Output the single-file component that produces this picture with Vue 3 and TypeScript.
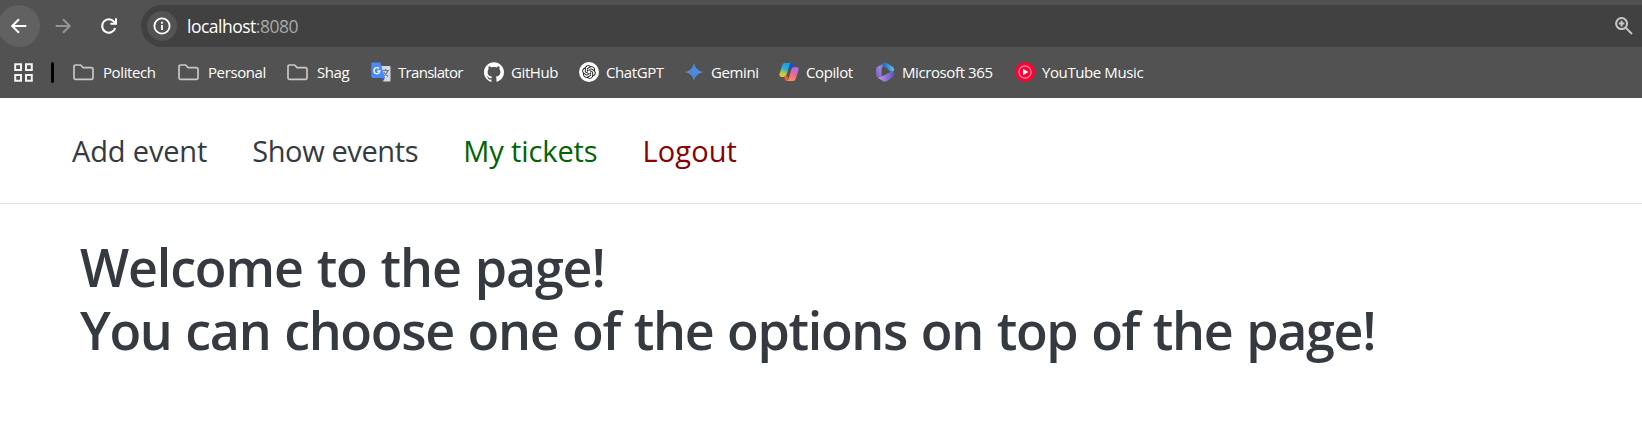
<script setup lang="ts">
interface Bookmark {
  label: string
  icon: 'folder' | 'translate' | 'github' | 'chatgpt' | 'gemini' | 'copilot' | 'm365' | 'ytmusic'
}

const bookmarks: Bookmark[] = [
  { label: 'Politech', icon: 'folder' },
  { label: 'Personal', icon: 'folder' },
  { label: 'Shag', icon: 'folder' },
  { label: 'Translator', icon: 'translate' },
  { label: 'GitHub', icon: 'github' },
  { label: 'ChatGPT', icon: 'chatgpt' },
  { label: 'Gemini', icon: 'gemini' },
  { label: 'Copilot', icon: 'copilot' },
  { label: 'Microsoft 365', icon: 'm365' },
  { label: 'YouTube Music', icon: 'ytmusic' },
]

const links = [
  { label: 'Add event', kind: 'add' },
  { label: 'Show events', kind: 'show' },
  { label: 'My tickets', kind: 'tickets' },
  { label: 'Logout', kind: 'logout' },
]
</script>

<template>
  <div class="window">
    <div class="chrome">
      <div class="toolbar">
        <button class="nav-btn back" aria-label="Back">
          <svg width="16" height="16" viewBox="0 0 16 16"><path d="M15.3 8H1.6M8 1.2 1.2 8 8 14.8" /></svg>
        </button>
        <button class="nav-btn forward" aria-label="Forward">
          <svg width="16" height="16" viewBox="0 0 16 16"><path d="M.7 8h13.7M8 1.2 14.8 8 8 14.8" /></svg>
        </button>
        <button class="nav-btn reload" aria-label="Reload">
          <svg width="18" height="18" viewBox="0 0 18 18"><path d="M15.2 11.2A6.7 6.7 0 1 1 14 4.7l1.6 1.8M16 1.2v5.6h-5.6" /></svg>
        </button>
        <div class="address">
          <span class="info">
            <svg width="18" height="18" viewBox="0 0 18 18"><circle cx="9" cy="9" r="7.6" /><path d="M9 8v5M9 4.7v2" /></svg>
          </span>
          <span class="url">localhost<span class="port">:8080</span></span>
          <svg class="zoom" width="18" height="18" viewBox="0 0 18 18"><circle cx="6.6" cy="6.6" r="5.5" /><path d="M10.6 10.6 17 17M3.8 6.6h5.6M6.6 3.8v5.6" /></svg>
        </div>
      </div>
      <div class="bookmarks">
        <svg class="apps" width="19" height="19" viewBox="0 0 19 19">
          <path d="M1.2 1.2h5.8v5.8H1.2zM12 1.2h5.8v5.8H12zM1.2 12h5.8v5.8H1.2zM12 12h5.8v5.8H12z" />
        </svg>
        <span class="divider"></span>
        <div v-for="b in bookmarks" :key="b.label" class="bookmark">
          <svg v-if="b.icon === 'folder'" class="icon" width="21" height="20" viewBox="0 0 21 20">
            <path d="M1 15.8V4.6Q1 3 2.6 3h5l2.5 2.6h8.1q1.8 0 1.8 1.8v8.4q0 1.6-1.7 1.6H2.6Q1 17.400 1 15.800z" fill="none" stroke="#c7c7c7" stroke-width="1.7" />
          </svg>
          <svg v-else-if="b.icon === 'translate'" class="icon" width="20" height="20" viewBox="0 0 20 20">
            <path d="M8 4h10.500q1 0 1 1v13.500q0 1-1 1H12z" fill="#d5d8dc" />
            <path d="m9.500 15.500h4.500l-2 4z" fill="#3157c8" />
            <path d="M11.500 8.500h6.500M14.600 7v1.500M16.700 8.500c-.5 2.700-2.300 4.600-4.200 5.500M12.800 10c.8 2 2.200 3.500 4.400 4.300" fill="none" stroke="#667b83" stroke-width="1.100" />
            <path d="M1.300.5h8L14 16H1.400q-1 0-1-1V1.500q0-1 .9-1z" fill="#4c8bf5" />
            <path d="M8 6.500A3 3 0 1 0 8.900 9H6.200" fill="none" stroke="#fff" stroke-width="1.300" />
          </svg>
          <svg v-else-if="b.icon === 'github'" class="icon" width="20" height="20" viewBox="0 0 24 24">
            <path fill="#fff" d="M12 .297c-6.630 0-12 5.373-12 12 0 5.303 3.438 9.800 8.205 11.385.6.113.82-.258.82-.577 0-.285-.01-1.040-.015-2.040-3.338.724-4.042-1.610-4.042-1.610C4.422 18.070 3.633 17.700 3.633 17.700c-1.087-.744.084-.729.084-.729 1.205.084 1.838 1.236 1.838 1.236 1.070 1.835 2.809 1.305 3.495.998.108-.776.417-1.305.76-1.605-2.665-.3-5.466-1.332-5.466-5.930 0-1.310.465-2.380 1.235-3.220-.135-.303-.54-1.523.105-3.176 0 0 1.005-.322 3.300 1.230.96-.267 1.980-.399 3-.405 1.020.006 2.040.138 3 .405 2.280-1.552 3.285-1.230 3.285-1.230.645 1.653.24 2.873.12 3.176.765.84 1.230 1.910 1.230 3.220 0 4.610-2.805 5.625-5.475 5.920.42.36.81 1.096.81 2.220 0 1.606-.015 2.896-.015 3.286 0 .315.21.69.825.57C20.565 22.092 24 17.592 24 12.297c0-6.627-5.373-12-12-12" />
          </svg>
          <svg v-else-if="b.icon === 'chatgpt'" class="icon" width="20" height="20" viewBox="0 0 20 20">
            <circle cx="10" cy="10" r="10" fill="#fff" />
            <path transform="translate(3.200 3.200) scale(.567)" fill="#111" d="M22.282 9.821a5.985 5.985 0 0 0-.516-4.910 6.046 6.046 0 0 0-6.510-2.900A6.065 6.065 0 0 0 4.981 4.182a5.985 5.985 0 0 0-3.998 2.900 6.046 6.046 0 0 0 .743 7.097 5.980 5.980 0 0 0 .511 4.911 6.051 6.051 0 0 0 6.515 2.900A5.985 5.985 0 0 0 13.260 24a6.056 6.056 0 0 0 5.772-4.206 5.990 5.990 0 0 0 3.998-2.900 6.056 6.056 0 0 0-.748-7.073zM13.260 22.430a4.476 4.476 0 0 1-2.876-1.041l.141-.081 4.779-2.758a.795.795 0 0 0 .393-.681v-6.737l2.020 1.169a.071.071 0 0 1 .038.052v5.583a4.504 4.504 0 0 1-4.495 4.494zM3.600 18.304a4.471 4.471 0 0 1-.535-3.014l.142.085 4.783 2.758a.771.771 0 0 0 .781 0l5.843-3.368v2.332a.08.08 0 0 1-.033.062L9.740 19.950a4.500 4.500 0 0 1-6.140-1.646zM2.341 7.896a4.485 4.485 0 0 1 2.365-1.973V11.600a.766.766 0 0 0 .388.677l5.814 3.354-2.020 1.169a.076.076 0 0 1-.071 0l-4.830-2.787A4.504 4.504 0 0 1 2.341 7.872zm16.596 3.856-5.833-3.388L15.119 7.200a.076.076 0 0 1 .071 0l4.830 2.791a4.494 4.494 0 0 1-.676 8.105v-5.678a.79.79 0 0 0-.407-.667zm2.011-3.023-.142-.085-4.773-2.782a.776.776 0 0 0-.785 0L9.409 9.230V6.897a.066.066 0 0 1 .028-.061l4.830-2.787a4.500 4.500 0 0 1 6.680 4.660zM8.307 12.863l-2.020-1.164a.08.08 0 0 1-.038-.057V6.075a4.500 4.500 0 0 1 7.375-3.453l-.142.080-4.778 2.758a.795.795 0 0 0-.393.681zm1.097-2.365 2.602-1.500 2.607 1.500v2.999l-2.597 1.500-2.607-1.500z" />
          </svg>
          <svg v-else-if="b.icon === 'gemini'" class="icon" width="20" height="20" viewBox="0 0 20 20">
            <defs>
              <linearGradient id="gemini" x1="0" x2="1"><stop offset="0" stop-color="#8e75c4" /><stop offset=".35" stop-color="#4f86da" /><stop offset=".75" stop-color="#4590e0" /><stop offset="1" stop-color="#9882bd" /></linearGradient>
            </defs>
            <path d="M10 1q1.500 7.500 9 9-7.500 1.500-9 9-1.500-7.500-9-9 7.500-1.500 9-9z" fill="url(#gemini)" />
          </svg>
          <svg v-else-if="b.icon === 'copilot'" class="icon" width="20" height="20" viewBox="0 0 20 20">
            <defs>
              <linearGradient id="cpL" x1=".6" y1="0" x2=".3" y2="1"><stop offset="0" stop-color="#159fee" /><stop offset=".4" stop-color="#2cabcf" /><stop offset=".75" stop-color="#b5ca4c" /><stop offset="1" stop-color="#f5c322" /></linearGradient>
              <linearGradient id="cpR" x1=".7" y1="0" x2=".3" y2="1"><stop offset="0" stop-color="#ae65ed" /><stop offset=".5" stop-color="#ed6799" /><stop offset="1" stop-color="#ff914f" /></linearGradient>
            </defs>
            <path d="M10.500 1h2q1.500 0 2 2l.7 2.500H12L9.500 9z" fill="#1554c4" />
            <path d="M5.800 1H12q-1 0-1.500 1.700L7.700 12.500Q7 15 5 15H2.500Q-.2 15 .5 12L3.300 3Q4 1 5.800 1z" fill="url(#cpL)" />
            <path d="m5 14.500 3.300-.5 1.800 5H8q-1.800 0-2.400-2z" fill="#ef5b39" />
            <path d="M14.200 19H8q1 0 1.500-1.700l2.800-9.800Q13 5 15 5h2.500q2.700 0 2 3l-2.800 9q-.7 2-2.500 2z" fill="url(#cpR)" />
          </svg>
          <svg v-else-if="b.icon === 'm365'" class="icon" width="20" height="20" viewBox="0 0 20 20">
            <defs>
              <linearGradient id="mA" x1="0" y1="1" x2="1" y2="0"><stop offset="0" stop-color="#7955b0" /><stop offset=".55" stop-color="#9c85e0" /><stop offset="1" stop-color="#2878c2" /></linearGradient>
              <linearGradient id="mB" x1="0" x2="1"><stop offset="0" stop-color="#1c66b9" /><stop offset="1" stop-color="#58c4f4" /></linearGradient>
              <linearGradient id="mC" x1="0" x2="1"><stop offset="0" stop-color="#c29ae8" /><stop offset="1" stop-color="#5b55bd" /></linearGradient>
            </defs>
            <path d="m10 .5-7 4Q1 5.600 1 7.500v5Q1 15 3 16l2 1 2.500-2Q6.500 14.500 6.500 13V7.500Q6.500 5.500 8 4.500z" fill="url(#mA)" />
            <path d="m9 .9 1-.6 7.300 4.200Q19 5.500 19 7.500V11l-5.500-3V7L8 4Q7.500 2 9 .9z" fill="url(#mB)" />
            <path d="M5 15.500 13.500 11 19 8.500v4q0 2-1.700 3L12 19q-2 1-4 0l-5-2.900z" fill="url(#mC)" />
          </svg>
          <svg v-else class="icon" width="20" height="20" viewBox="0 0 20 20">
            <circle cx="10" cy="10" r="10" fill="#ff0033" />
            <circle cx="10" cy="10" r="6.100" fill="none" stroke="#ff9bad" stroke-width="1.100" />
            <path d="M8 6.800 13.400 10 8 13.200z" fill="#fff" />
          </svg>
          <span :class="['label', b.icon]">{{ b.label }}</span>
        </div>
      </div>
    </div>

    <header class="menu">
      <a v-for="l in links" :key="l.kind" :class="['link', l.kind]">{{ l.label }}</a>
    </header>
    <main class="content">
      <h1>
        <span class="welcome">Welcome to the page!</span>
        <span class="hint">You can choose one of the options on top of the page!</span>
      </h1>
    </main>
  </div>
</template>

<style>
body {
  margin: 0;
  background: #fff;
}
</style>

<style scoped>
.window {
  height: 436px;
  overflow: hidden;
  background: #fff;
  font-family: 'Open Sans', 'Noto Sans', sans-serif;
}
.chrome {
  height: 98px;
  box-sizing: border-box;
  padding-top: 5px;
  background: #525252;
  overflow: hidden;
}
.toolbar {
  display: flex;
  height: 42px;
}
.nav-btn {
  display: flex;
  align-items: center;
  justify-content: center;
  flex: none;
  width: 42px;
  height: 42px;
  margin: 0 3px 0 0;
  padding: 0;
  border: 0;
  border-radius: 50%;
  background: none;
}
.nav-btn svg {
  fill: none;
  stroke: #fff;
  stroke-width: 2;
  margin-top: -1px;
}
.back {
  margin-left: -2px;
  background: #616161;
}
.forward svg {
  stroke: #959595;
  margin-right: 2px;
}
.reload {
  margin-right: 11px;
}
.address {
  display: flex;
  align-items: center;
  flex: 1;
  margin-right: -30px;
  padding: 0 39px 0 6px;
  border-radius: 21px;
  background: #414141;
}
.info {
  display: flex;
  align-items: center;
  justify-content: center;
  width: 30px;
  height: 30px;
  border-radius: 50%;
  background: #535353;
}
.info svg {
  fill: none;
  stroke: #fff;
  stroke-width: 1.8;
}
.url {
  margin-left: 10px;
  color: #fff;
  font-size: 17.5px;
  letter-spacing: -0.5px;
}
.port {
  color: #a9a9a9;
}
.zoom {
  margin-left: auto;
  fill: none;
  stroke: #c7c7c7;
  stroke-width: 2;
}
.bookmarks {
  display: grid;
  grid-template-columns: 37px 22px 105px 109px 84px 113px 95px 105px 95px 96px 140px 140px;
  align-items: center;
  height: 50px;
  padding-left: 14px;
}
.apps {
  fill: none;
  stroke: #f2f2f2;
  stroke-width: 2;
}
.divider {
  width: 3px;
  height: 21px;
  border-radius: 2px;
  background: #000;
}
.bookmark {
  display: flex;
  align-items: center;
  white-space: nowrap;
}
.icon {
  flex: none;
}
.label {
  margin-left: 7px;
  color: #fff;
  font-size: 15px;
  line-height: 20px;
  letter-spacing: -0.4px;
}
.label.folder {
  margin-left: 9px;
}
.translate {
  letter-spacing: -0.7px;
}
.menu {
  display: flex;
  align-items: center;
  height: 106px;
  box-sizing: border-box;
  padding-left: 72px;
  border-bottom: 1px solid #dee2e6;
}
.link {
  color: #343a40;
  font-size: 29px;
  line-height: 40px;
}
.add,
.show,
.tickets {
  margin-right: 45px;
}
.add {
  letter-spacing: -0.15px;
}
.show {
  letter-spacing: -0.38px;
}
.tickets {
  color: #006400;
  letter-spacing: -0.1px;
}
.logout {
  color: #8b0000;
  letter-spacing: 0.1px;
}
.content {
  padding: 31px 0 0 80px;
}
h1 {
  margin: 0;
  color: #343a40;
  font-size: 52px;
  font-weight: 600;
  line-height: 63px;
  white-space: nowrap;
}
.welcome,
.hint {
  display: block;
  word-spacing: 1.6px;
}
.welcome {
  letter-spacing: -1.15px;
}
.hint {
  letter-spacing: -1.33px;
}
</style>
